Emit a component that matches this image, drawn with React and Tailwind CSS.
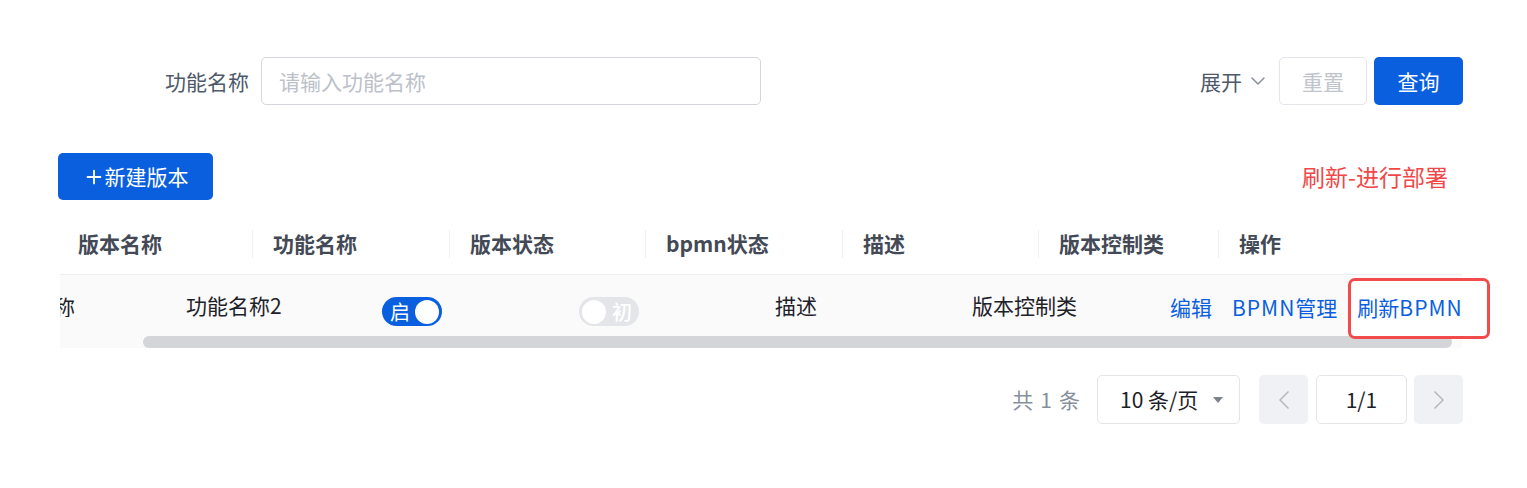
import { ChevronDown, ChevronLeft, ChevronRight, Plus } from 'lucide-react';

const font = { fontFamily: '"Noto Sans CJK SC", "Noto Sans", sans-serif' };

const headers = [
  { label: '版本名称', cls: 'w-[192px] pl-[18px]' },
  { label: '功能名称', cls: 'w-[196px] pl-[20px]' },
  { label: '版本状态', cls: 'w-[195px] pl-[20px]' },
  { label: 'bpmn状态', cls: 'w-[196px] pl-[20px]' },
  { label: '描述', cls: 'w-[195px] pl-[20px]' },
  { label: '版本控制类', cls: 'w-[179px] pl-[20px]' },
  { label: '操作', cls: 'flex-1 pl-[20px]' },
];

function Toggle({ on, text }) {
  return (
    <div
      className={`flex items-center justify-between w-[60px] h-[29px] rounded-full px-[3px] ${
        on ? 'bg-[#0a5fdf]' : 'bg-[#e3e5e9]'
      }`}
    >
      {on ? (
        <>
          <span className="text-white text-[20px] leading-none pl-[5px]">{text}</span>
          <span className="w-[24px] h-[24px] rounded-full bg-white" />
        </>
      ) : (
        <>
          <span className="w-[24px] h-[24px] rounded-full bg-white" />
          <span className="text-white text-[20px] font-medium leading-none pr-[4px]">{text}</span>
        </>
      )}
    </div>
  );
}

export default function App() {
  return (
    <div style={font} className="w-[1527px] h-[488px] bg-white text-[21px] text-[#1d2129] pl-[58px] pr-[64px] pt-[57px]">
      {/* search row */}
      <div className="flex items-center h-[48px]">
        <div className="w-[107px]" />
        <span className="text-[#4e5969] leading-none">功能名称</span>
        <div className="ml-[12px] w-[500px] h-[48px] border border-[#d3d6dc] rounded-[5px] flex items-center px-[17px]">
          <span className="text-[#bcc1c9] leading-none">请输入功能名称</span>
        </div>
        <div className="flex-1" />
        <button className="flex items-center gap-[4px] text-[#4e5969] leading-none mr-[9px]">
          展开
          <ChevronDown className="w-[24px] h-[24px] text-[#8a9099]" strokeWidth={1.5} />
        </button>
        <button className="w-[88px] h-[48px] border border-[#e3e5ea] rounded-[5px] text-[#c0c4cc] leading-none">重置</button>
        <button className="ml-[7px] w-[89px] h-[48px] bg-[#0a5fdf] rounded-[5px] text-white leading-none">查询</button>
      </div>

      {/* toolbar */}
      <div className="flex items-center justify-between mt-[48px] h-[47px]">
        <button className="flex items-center justify-center w-[155px] h-[47px] bg-[#0a5fdf] rounded-[5px] text-white leading-none">
          <Plus className="w-[22px] h-[22px]" strokeWidth={2} />
          新建版本
        </button>
        <span className="text-[#f04848] text-[23px] leading-none mr-[15px]">刷新-进行部署</span>
      </div>

      {/* table */}
      <div className="ml-[2px] mr-[1px] mt-[13px]">
        <div className="flex items-center h-[62px] border-b border-[#eceef1]">
          {headers.map((h, i) => (
            <div key={h.label} className="flex items-center" style={i === headers.length - 1 ? { flex: 1 } : undefined}>
              <div className={`${h.cls} font-bold text-[#434a56] leading-none`}>{h.label}</div>
              {i < headers.length - 1 && <div className="w-px h-[28px] bg-[#eef0f3]" />}
            </div>
          ))}
        </div>

        <div className="bg-[#fafafa]">
          <div className="flex items-center h-[61px] leading-none">
            <div className="w-[15px] overflow-hidden shrink-0 pt-[2px]">
              <div className="-ml-[69px] w-[84px]">版本名称</div>
            </div>
            <div className="w-[111px] shrink-0" />
            <div className="w-[196px] shrink-0">功能名称2</div>
            <div className="w-[197px] shrink-0 pt-[12px]"><Toggle on text="启" /></div>
            <div className="w-[196px] shrink-0 pt-[12px]"><Toggle text="初" /></div>
            <div className="w-[197px] shrink-0">描述</div>
            <div className="w-[198px] shrink-0">版本控制类</div>
            <div className="flex items-center gap-[20px] shrink-0 text-[#0a5fdf] pt-[4px]">
              <span>编辑</span>
              <span><span className="tracking-[1px]">BPMN</span>管理</span>
              <span className="relative">
                <span className="absolute -left-[9px] -top-[19px] w-[142px] h-[61px] border-[3px] border-[#f24b4b] rounded-[7px] bg-white" />
                <span className="relative">刷新<span className="tracking-[1px]">BPMN</span></span>
              </span>
            </div>
          </div>
          <div className="h-[12px] ml-[83px] mr-[10px] rounded-full bg-[#d4d5d8]" />
        </div>
      </div>

      {/* pagination */}
      <div className="flex items-center justify-end mt-[27px] h-[49px] leading-none">
        <span className="text-[#86909c] mr-[17px] flex gap-[7px]">
          <span>共</span><span>1</span><span>条</span>
        </span>
        <div className="w-[143px] h-[49px] border border-[#e3e5ea] rounded-[5px] flex items-center pl-[22px] pr-[16px] justify-between">
          <span>10 条/页</span>
          <span className="w-0 h-0 border-l-[5px] border-r-[5px] border-t-[6px] border-l-transparent border-r-transparent border-t-[#7d838d]" />
        </div>
        <div className="ml-[19px] w-[49px] h-[49px] rounded-[5px] bg-[#f0f1f4] flex items-center justify-center">
          <ChevronLeft className="w-[32px] h-[32px] text-[#b5b9c1]" strokeWidth={1.25} />
        </div>
        <div className="ml-[8px] w-[91px] h-[49px] border border-[#e3e5ea] rounded-[5px] flex items-center justify-center">1/1</div>
        <div className="ml-[7px] w-[49px] h-[49px] rounded-[5px] bg-[#f0f1f4] flex items-center justify-center">
          <ChevronRight className="w-[32px] h-[32px] text-[#b5b9c1]" strokeWidth={1.25} />
        </div>
      </div>
    </div>
  );
}
